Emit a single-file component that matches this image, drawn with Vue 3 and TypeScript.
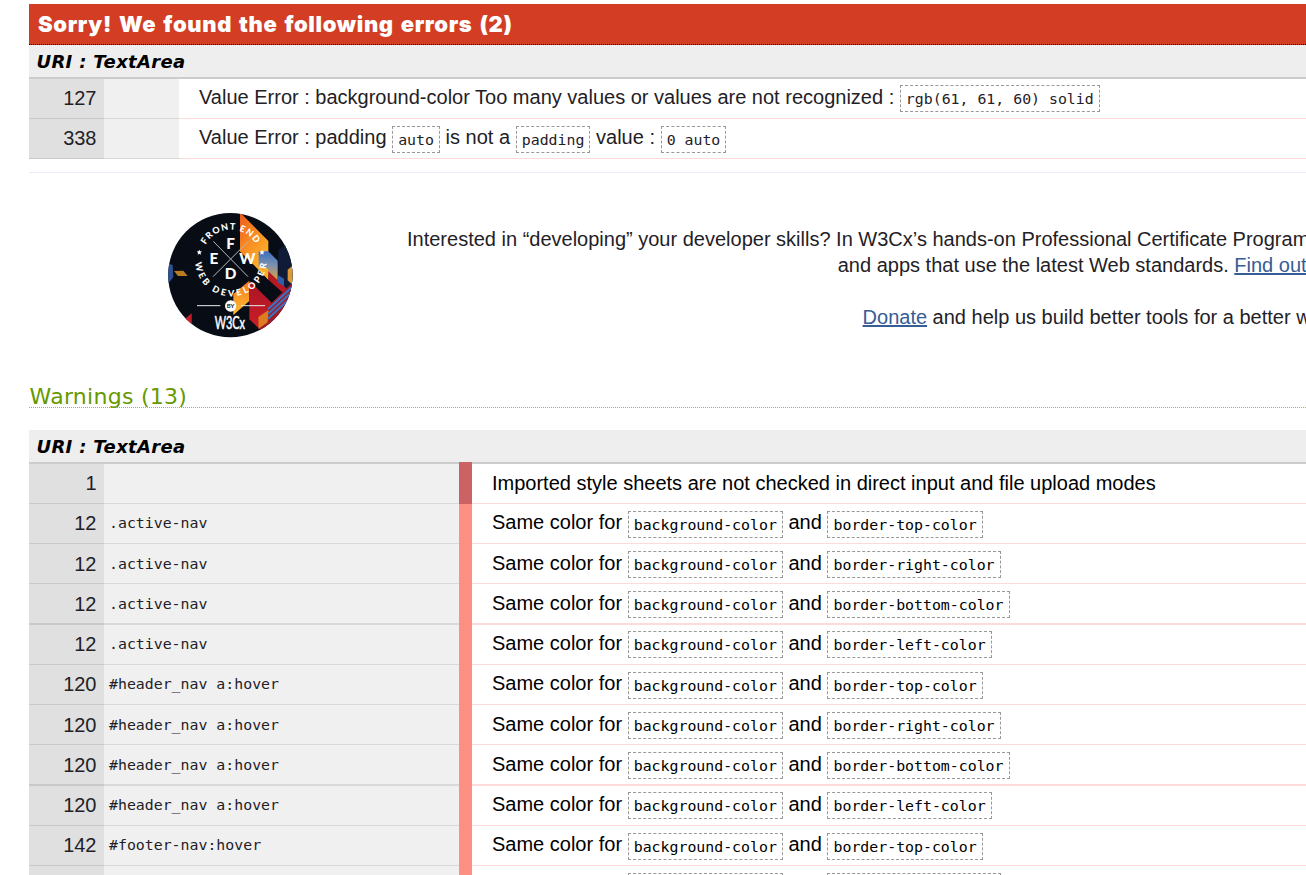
<script setup lang="ts">
interface Part {
  text: string
  code?: boolean
}

interface ErrorRow {
  line: number
  parts: Part[]
}

interface WarningRow {
  line: number
  selector: string
  parts: Part[]
  level: 'high' | 'normal'
}

const t = (text: string): Part => ({ text })
const c = (text: string): Part => ({ text, code: true })

const errors: ErrorRow[] = [
  {
    line: 127,
    parts: [
      t('Value Error : background-color Too many values or values are not recognized : '),
      c('rgb(61, 61, 60) solid'),
    ],
  },
  {
    line: 338,
    parts: [t('Value Error : padding '), c('auto'), t(' is not a '), c('padding'), t(' value : '), c('0 auto')],
  },
]

const sameColor = (line: number, selector: string, side: string): WarningRow => ({
  line,
  selector,
  level: 'normal',
  parts: [t('Same color for '), c('background-color'), t(' and '), c(`border-${side}-color`)],
})

const warnings: WarningRow[] = [
  {
    line: 1,
    selector: '',
    level: 'high',
    parts: [t('Imported style sheets are not checked in direct input and file upload modes')],
  },
  ...['top', 'right', 'bottom', 'left'].map((s) => sameColor(12, '.active-nav', s)),
  ...['top', 'right', 'bottom', 'left'].map((s) => sameColor(120, '#header_nav a:hover', s)),
  ...['top', 'right', 'bottom', 'left'].map((s) => sameColor(142, '#footer-nav:hover', s)),
]

// Every fourth row is one pixel taller; its content drifts down evenly in between.
const isTall = (i: number): boolean => i % 4 === 3
const drift = (i: number): string => `${((i % 4) * 0.25).toFixed(2)}px`
</script>

<template>
  <main class="page">
    <section class="errors">
      <h3 class="sorry">Sorry! We found the following errors (2)</h3>
      <h4 class="uri">URI : TextArea</h4>
      <div v-for="(row, i) in errors" :key="row.line" class="row error-row" :style="{ '--drift': drift(i) }">
        <div class="num">{{ row.line }}</div>
        <div class="selector"></div>
        <div class="message"><template v-for="(p, k) in row.parts" :key="k"><code v-if="p.code">{{ p.text }}</code><span v-else>{{ p.text }}</span></template></div>
      </div>
    </section>

    <section class="banner">
      <svg class="badge" viewBox="54 38 375 375" width="125" height="125" role="img" aria-label="W3Cx Front End Web Developer">
        <defs>
          <clipPath id="disc"><circle cx="241" cy="224.5" r="186.5" /></clipPath>
          <linearGradient id="flame" x1="0" y1="0" x2="0.6" y2="1">
            <stop offset="0" stop-color="#e9581d" />
            <stop offset="0.45" stop-color="#f98a22" />
            <stop offset="1" stop-color="#fdb92c" />
          </linearGradient>
          <linearGradient id="ember" x1="0" y1="0" x2="0" y2="1">
            <stop offset="0" stop-color="#f37a20" />
            <stop offset="1" stop-color="#fdbd32" />
          </linearGradient>
          <linearGradient id="ruby" x1="0" y1="0" x2="0" y2="1">
            <stop offset="0" stop-color="#a81426" />
            <stop offset="1" stop-color="#d52127" />
          </linearGradient>
          <linearGradient id="steel" x1="0" y1="0" x2="0" y2="1">
            <stop offset="0" stop-color="#3b6ec0" />
            <stop offset="0.45" stop-color="#7c91b0" />
            <stop offset="1" stop-color="#f0a527" />
          </linearGradient>
          <path id="arcTop" d="M167 133 A86 86 0 0 1 328 163" />
          <path id="arcBottom" d="M136 187 A107 107 0 0 0 350 175" />
        </defs>
        <g clip-path="url(#disc)">
          <rect x="50" y="35" width="385" height="385" fill="#080d15" />
          <path d="M385 150 L435 110 V300 L385 250Z" fill="#101b38" />
          <path d="M270 36 L355 122 V238 L270 153Z" fill="url(#flame)" />
          <path d="M326 153 H355 L383 181 V246 L326 200Z" fill="url(#steel)" />
          <path d="M326 200 L355 205 V238Z" fill="#f8ad2b" />
          <path d="M355 213 L412 267 L407 285 L355 238Z" fill="#b51a22" />
          <path d="M383 224 L402 235 V258 L383 246Z" fill="#315da9" />
          <path d="M413 208 L435 190 V260 L413 240Z" fill="#df9a36" />
          <path d="M250 281 L298 241 V302 L250 344Z" fill="url(#ember)" />
          <path d="M298 241 L365 307 V420 L298 357Z" fill="url(#ruby)" />
          <path d="M365 307 L435 240 V420 L325 385Z" fill="#9e1b29" />
          <path d="M325 350 L356 329 L353 366 L326 385Z" fill="#dd7d20" />
          <path d="M354 327 L435 252 M354 341 L435 266 M354 355 L435 280" fill="none" stroke="#3a72c4" stroke-width="6" />
          <path d="M50 188 L68 194 L70 230 L50 256Z" fill="#2c5292" />
          <path d="M72 212 L100 211 L113 227 L84 227Z" fill="#b97b25" />
          <path d="M102 358 L125 339 V380Z" fill="#c41f2a" />
        </g>
        <path d="M190 123 L294 229 M295 123 L189 229" stroke="#b4b7bc" stroke-width="3" />
        <path d="M141 316 H211 M273 316 H345" stroke="#e9e9e9" stroke-width="3" />
        <g class="ring">
          <text><textPath href="#arcTop" textLength="181">FRONT END</textPath></text>
          <text><textPath href="#arcBottom" textLength="322">WEB DEVELOPER</textPath></text>
        </g>
        <g class="initials" text-anchor="middle">
          <text x="242" y="145">F</text>
          <text x="192" y="190">E</text>
          <text x="292" y="190">W</text>
          <text x="242" y="237">D</text>
        </g>
        <g fill="#fff">
          <path d="M148 148 l2.4 5 5.4.7-4 3.8 1 5.4-4.8-2.6-4.8 2.6 1-5.4-4-3.8 5.4-.7Z" />
          <path d="M336 148 l2.4 5 5.4.7-4 3.8 1 5.4-4.8-2.6-4.8 2.6 1-5.4-4-3.8 5.4-.7Z" />
          <circle cx="242" cy="317" r="17" />
        </g>
        <text class="by" x="242" y="324" text-anchor="middle">BY</text>
        <text class="brand" x="194" y="387" textLength="91" lengthAdjust="spacingAndGlyphs">W3Cx</text>
      </svg>
      <div class="pitch">
        <p>
          <span class="lead">Interested in “developing” your developer skills? In W3Cx’s hands-on Professional Certificate Program, learn how to code the right way by creating Web sites</span><br />
          and apps that use the latest Web standards. <a href="#">Find out more!</a>
        </p>
        <p><a href="#">Donate</a> and help us build better tools for a better web.</p>
      </div>
    </section>

    <section class="warnings">
      <h3 class="heading">Warnings (13)</h3>
      <h4 class="uri">URI : TextArea</h4>
      <div
        v-for="(row, i) in warnings"
        :key="i"
        class="row warning-row"
        :class="[row.level, { tall: isTall(i) }]"
        :style="{ '--drift': drift(i) }"
      >
        <div class="num">{{ row.line }}</div>
        <div class="selector">{{ row.selector }}</div>
        <div class="bar"></div>
        <div class="message"><template v-for="(p, k) in row.parts" :key="k"><code v-if="p.code">{{ p.text }}</code><span v-else>{{ p.text }}</span></template></div>
      </div>
    </section>
  </main>
</template>

<style>
html,
body {
  margin: 0;
  background: #fff;
  overflow: hidden;
}
</style>

<style scoped>
.page {
  box-sizing: border-box;
  height: 875px;
  padding: 4px 0 0 29px;
  overflow: hidden;
  color: #1f2126;
  font: 20px/26px 'Liberation Sans', Arial, sans-serif;
}

h3,
h4,
p {
  margin: 0;
}

.errors {
  padding-bottom: 13px;
  border-bottom: 1px solid #ebebff;
}

.sorry {
  box-sizing: border-box;
  height: 41px;
  padding-left: 9px;
  border-bottom: 1px dotted #000;
  background: #d23d24;
  color: #fff;
  font: 900 22px/40px Inter, 'Liberation Sans', sans-serif;
  letter-spacing: 0.63px;
  word-spacing: 2px;
  white-space: nowrap;
}

.uri {
  box-sizing: border-box;
  height: 34px;
  padding-left: 7.5px;
  border-bottom: 2px solid #ccc;
  background: #eee;
  color: #000;
  font: italic bold 18px/34px 'DejaVu Sans', Verdana, sans-serif;
  letter-spacing: 0.32px;
}

.row {
  display: grid;
  height: 40px;
  line-height: 26px;
  white-space: pre;
}

.error-row {
  grid-template-columns: 75px 75px 1fr;
}

.warning-row {
  grid-template-columns: 75px 355px 13px 1fr;
}

.tall {
  height: 41px;
}

.row > div {
  box-sizing: border-box;
  border-bottom: 1px solid;
  padding-top: calc(6px + var(--drift, 0px));
}

.row.tall > div {
  border-bottom-width: 2px;
}

.row > .num {
  padding-right: 7.5px;
  background: #e0e0e0;
  border-color: #c9c9c9;
  text-align: right;
}

.error-row > .num {
  padding-top: 5.5px;
}

.row > .selector {
  padding-left: 5px;
  background: #f0f0f0;
  border-color: #d9d9d9;
  font: 14.87px/26px 'DejaVu Sans Mono', monospace;
}

.row > .message {
  padding-left: 20px;
  padding-top: calc(5px + var(--drift, 0px));
  border-color: #ffdada;
}

.warning-row > .message {
  color: #000;
}

.row > .bar {
  border: 0;
  background: #fb9083;
}

.high > .bar {
  margin-top: -2px;
  background: #cb6365;
}

.high > .message {
  padding-top: 6px;
}

code {
  padding: 4px 5.1px 3px;
  border: 1px dashed #999;
  font: 14.87px/17px 'DejaVu Sans Mono', monospace;
  vertical-align: -0.25px;
}

.banner {
  display: flex;
  height: 208px;
}

.badge {
  flex: none;
  margin: 40px 0 0 139px;
}

.ring text {
  fill: #fff;
  font: 900 27px Lato, sans-serif;
}

.initials text {
  fill: #fff;
  font: 900 46px Lato, sans-serif;
}

.by {
  fill: #111;
  font: bold 18px Lato, sans-serif;
}

.brand {
  fill: #fff;
  stroke: #fff;
  stroke-width: 1.5px;
  font: 49px Lato, sans-serif;
}

.pitch {
  flex: none;
  width: 1387px;
  margin: 53px 0 0 114px;
  text-align: center;
  white-space: nowrap;
}

.lead {
  padding-right: 11px;
}

.pitch p + p {
  margin-top: 26px;
}

a {
  color: #365d95;
  text-decoration: underline;
}

.heading {
  box-sizing: border-box;
  height: 27px;
  margin-bottom: 22px;
  padding-left: 0.5px;
  border-bottom: 1px dotted #aaa878;
  color: #690;
  font: 22px/32px 'DejaVu Sans', Verdana, sans-serif;
  letter-spacing: 0.28px;
}
</style>
